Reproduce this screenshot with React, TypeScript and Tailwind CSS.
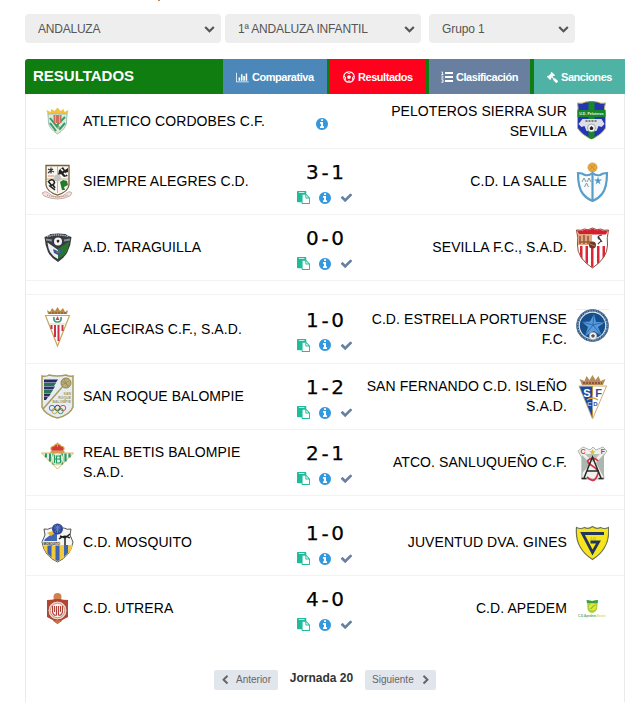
import type { ReactNode } from "react";
import { FaGavel } from "react-icons/fa";

const ICONS = {
  paste:
    "M768 1664h896v-640h-416q-40 0-68-28t-28-68v-416h-384v1152zm256-1440v-64q0-13-9.5-22.5t-22.5-9.5h-704q-13 0-22.5 9.5t-9.5 22.5v64q0 13 9.5 22.5t22.5 9.5h704q13 0 22.5-9.5t9.5-22.5zm256 672h299l-299-299v299zm512 128v672q0 40-28 68t-68 28h-960q-40 0-68-28t-28-68v-160h-544q-40 0-68-28t-28-68v-1344q0-40 28-68t68-28h1088q40 0 68 28t28 68v328q21 13 36 28l408 408q28 28 48 76t20 88z",
  info: "M1152 1376v-160q0-14-9-23t-23-9h-96v-512q0-14-9-23t-23-9h-320q-14 0-23 9t-9 23v160q0 14 9 23t23 9h96v320h-96q-14 0-23 9t-9 23v160q0 14 9 23t23 9h448q14 0 23-9t9-23zm-128-896v-160q0-14-9-23t-23-9h-192q-14 0-23 9t-9 23v160q0 14 9 23t23 9h192q14 0 23-9t9-23zm640 416q0 209-103 385.5t-279.5 279.5-385.5 103-385.5-103-279.5-279.5-103-385.5 103-385.5 279.5-279.5 385.5-103 385.5 103 279.5 279.5 103 385.5z",
  check:
    "M1671 566q0 40-28 68l-724 724-136 136q-28 28-68 28t-68-28l-136-136-362-362q-28-28-28-68t28-68l136-136q28-28 68-28t68 28l294 295 656-657q28-28 68-28t68 28l136 136q28 28 28 68z",
  down: "M1683 808l-742 741q-19 19-45 19t-45-19l-742-741q-19-19-19-45.5t19-45.5l166-165q19-19 45-19t45 19l531 531 531-531q19-19 45-19t45 19l166 165q19 19 19 45.5t-19 45.5z",
  left: "M1427 301l-531 531 531 531q19 19 19 45t-19 45l-166 166q-19 19-45 19t-45-19l-742-742q-19-19-19-45t19-45l742-742q19-19 45-19t45 19l166 166q19 19 19 45t-19 45z",
};

function Icon({ name, className }: { name: keyof typeof ICONS; className: string }) {
  return (
    <svg viewBox="0 0 1792 1792" fill="currentColor" className={className}>
      <path d={ICONS[name]} />
    </svg>
  );
}

function ChartIcon() {
  return (
    <svg viewBox="0 0 2048 1792" fill="currentColor" className="w-[13px] h-[11px] shrink-0">
      <path d="M640 896v512h-256v-512h256zm384-512v1024h-256v-1024h256zm1024 1152v128h-2048v-1536h128v1408h1920zm-640-896v768h-256v-768h256zm384-384v1152h-256v-1152h256z" />
    </svg>
  );
}

function BallIcon() {
  return (
    <svg viewBox="0 0 12 12" className="w-3 h-3 shrink-0">
      <circle cx="6" cy="6" r="5.300" fill="none" stroke="currentColor" strokeWidth="1.100" />
      <path d="M6 4l2 1.500-.8 2.300H4.800L4 5.500z" fill="currentColor" />
      <path d="M3.700 1.300L6 2.600l2.300-1.300M.9 5.200l1.600 1L2.200 9M11.100 5.200l-1.600 1 .3 2.800M4.300 10.900L6 9.800l1.700 1.100" fill="none" stroke="currentColor" />
    </svg>
  );
}

function ListIcon() {
  return (
    <svg viewBox="0 0 12 12" className="w-3 h-3 shrink-0">
      <path d="M4 1h8v2H4zM4 5h8v2H4zM4 9h8v2H4z" fill="currentColor" />
      <path d="M.3 1h1.200v2.500M.3 3.500h2.200M.4 5h1.500v.8L.5 7h2M.4 8.700h1.700v2.600H.3M1 10h1" fill="none" stroke="currentColor" strokeWidth=".8" />
    </svg>
  );
}

// Team crests, all on a 34x48 canvas
const CRESTS: Record<string, ReactNode> = {
  cordobes: (
    <>
      <path d="M8 19 6.500 13l4 2 1-3 3 2 3-3.500 3 3.500 3-2 1 3 4-2-1.500 6z" fill="#f2c23c" />
      <path d="M8 17h19l-.5 9q-1 6-9 11-8-5-9-11z" fill="#dfe9df" stroke="#9cc3ab" strokeWidth="1" />
      <path d="M10 21l8 10M25 20l-8 8 3 4 5-6M10 26l6 8" stroke="#339b69" strokeWidth="2" fill="none" />
      <path d="M13.500 18h8v8h-8z" fill="#cc6f5c" />
      <path d="M15.500 17v9M19.500 17v9" stroke="#e8b2a2" strokeWidth=".8" />
      <path d="M17 30l3-1-1 3z" fill="#e3b13c" />
    </>
  ),
  siempre: (
    <>
      <path d="M6 7.500h23V27q-1 7-11.500 10Q7 34 6 27z" fill="#f8f6ef" stroke="#77613b" strokeWidth="1.300" />
      <path d="M17.500 8v27M7 21h21" stroke="#aaa28c" strokeWidth=".8" />
      <path d="M19 12l4-3 2 3 3-2v4l-3 1 3 3-4 1-3-3-3 1z" fill="#222" />
      <path d="M21 11l2 2M24 15l2 2" stroke="#fff" strokeWidth="1.500" />
      <path d="M8 11l6 3M11 9.500v6M8 15l5-4" stroke="#333" strokeWidth="1.200" />
      <path d="M8 18h6" stroke="#e58b5a" />
      <path d="M8 24q4-4 6-1t-4 5l5 4M8 23l4 5M13 27l2 3" stroke="#222" strokeWidth="1.600" fill="none" />
      <circle cx="17.500" cy="20" r="3.500" fill="#c6c4c0" />
      <path d="M20 24l3-2 4 1 1 4-4 2 1 3h-3z" fill="#267b2b" />
      <path d="M2 35q3-2 5-1 5 5 10.500 5T28 34q2-1 4 1l-2 3q-6 3-12.500 3T4 38z" fill="#eee5e1" stroke="#b99088" strokeWidth=".7" />
      <path d="M7 37q10 4 21 0" stroke="#c36d65" fill="none" strokeDasharray="1 1" />
    </>
  ),
  taraguilla: (
    <>
      <path d="M4.500 13q4-1 6-3 8-1 15 0 2 2 6 3-.5 8-4 15-3 6-9.500 10Q11 34 8 28q-3-7-3.500-15z" fill="#373b42" />
      <path d="M7.500 18.500L18 26v9Q10 31 8.500 24z" fill="#eff0f3" />
      <path d="M29.500 17L18 25v10q9-4 10-11z" fill="#28762c" />
      <path d="M7 12.500q11-3 22 0" stroke="#aaadb3" strokeWidth="1.500" strokeDasharray="1.500 .7" fill="none" />
      <path d="M6 15.500l6 1M30 15.500l-6 1" stroke="#8b9197" strokeWidth="2" />
      <circle cx="18" cy="17.500" r="4" fill="#f4f4f4" />
      <path d="M18 15.500l1.500 1.300-.7 1.700h-1.600l-.7-1.700z" fill="#222" />
      <path d="M13 25l5 2 5-2-1 4-4 2-4-2z" fill="#2b5f9b" />
      <path d="M16 28h4" stroke="#d45b48" />
    </>
  ),
  algeciras: (
    <>
      <path d="M8 9 7 5l3 2 2-4 3 3 2.500-4L20 6l3-3 2 4 3-2-1 4z" fill="#b98b43" />
      <path d="M9 8h17" stroke="#874d3e" strokeWidth="1.200" strokeDasharray="2 1" />
      <path d="M5.500 10.500h24L17.500 41z" fill="#fff" stroke="#c9a95c" strokeWidth="1.200" />
      <path d="M11.500 20v4M15 20v12M18.500 20v16M22.500 20v6" stroke="#cb3148" strokeWidth="2" />
      <path d="M14 12q-1 5 3.500 5T21 12" stroke="#459a79" strokeWidth="1.700" fill="none" />
      <path d="M17.500 11l2 4h-4z" fill="#bd4f52" />
      <path d="M9.500 19h16" stroke="#d5b9a4" strokeWidth=".7" />
    </>
  ),
  roque: (
    <>
      <path d="M2 3q4 1 7-1 8 2 17 0 4 2 7 1v31q-3 8-15.500 11Q5 42 2 34z" fill="#e5edf2" stroke="#a99b5c" strokeWidth="1.500" />
      <path d="M4 6.500h14l-2 3H4z" fill="#242c5d" />
      <path d="M4 10h12l-2 3H4z" fill="#277257" />
      <path d="M4 13.500h11l-2 3H4z" fill="#2c3069" />
      <path d="M4 17h9l-2 3H4z" fill="#2c7458" />
      <path d="M4 20.500h7l-2 3H4zM4 24h4l-2 3H4z" fill="#302c62" />
      <path d="M3 36L24 12" stroke="#a99b5c" strokeWidth="1.500" />
      <circle cx="26" cy="10" r="5" fill="#b9ac75" stroke="#93864c" />
      <path d="M22 8l7 5M24 6l4 8M22 12l7-4" stroke="#8d8352" strokeWidth=".6" />
      <g fill="#a3965e" fontFamily="Liberation Sans" fontSize="3.500" fontWeight="700" textAnchor="end">
        <text x="31" y="21.500">SAN</text>
        <text x="31" y="25.500">ROQUE</text>
        <text x="31" y="29.500">BALOMPIE</text>
      </g>
      <g fill="none" strokeWidth="1">
        <circle cx="12" cy="35" r="2.700" stroke="#4e75bf" />
        <circle cx="17.500" cy="35" r="2.700" stroke="#333" />
        <circle cx="23" cy="35" r="2.700" stroke="#d9505b" />
        <circle cx="14.500" cy="38" r="2.700" stroke="#c8a93c" />
        <circle cx="20.500" cy="38" r="2.700" stroke="#43935c" />
      </g>
    </>
  ),
  betis: (
    <>
      <path d="M1.500 14h32L17.500 30z" fill="#fff" stroke="#d8b35c" strokeWidth="1" />
      <path d="M6 14.500v4M10 14.500v8M13.500 14.500v11M22 14.500v11M25.500 14.500v8M29.500 14.500v4" stroke="#299b62" strokeWidth="2.300" />
      <circle cx="17.500" cy="20" r="6" fill="#e3f1e3" stroke="#b5bd6b" strokeWidth=".7" />
      <path d="M14.500 16v8M20.500 16v8M14.500 20h6M16.500 17h3q2 2 0 3 3 2 0 4h-3z" stroke="#299b62" strokeWidth="1.200" fill="none" />
      <path d="M12 12q-3-4 2-5 1-2 3.500-2T21 7q5 1 2 5z" fill="#d43a3b" stroke="#d5a846" strokeWidth="1.200" />
      <path d="M17.500 3.500V8M16 5h3" stroke="#d5a846" />
      <path d="M10.500 13h14" stroke="#cc9742" strokeWidth="1.700" />
    </>
  ),
  mosquito: (
    <>
      <path d="M4 10q4 1 7-1h13q3 2 7 1l-1 6 3 7q-2 14-15.500 20Q4 37 2 23l3-7z" fill="#f5f5f3" stroke="#555" strokeWidth="1" />
      <path d="M3 26h30q-3 11-15.500 16.500Q5 37 3 26z" fill="#f3c83b" />
      <path d="M7.500 26h4v12.500l-4-4zM15.500 26h4v15l-2 1-2-1zM24 26h4v8l-4 4z" fill="#3d63b5" />
      <path d="M5 20l12-9v11H4z" fill="#4166b5" />
      <path d="M7 14q5-3 8 0l-4 3z" fill="#e7bb35" />
      <circle cx="17.500" cy="10" r="5.500" fill="#304896" />
      <path d="M17.500 6v8M14 9h7M15 13l5-7M15 6l5 7" stroke="#6788ce" strokeWidth=".9" />
      <path d="M19 20q5-5 11-1M25 18v8M20 17l5 2 5-4" stroke="#202020" strokeWidth="1.500" fill="none" />
      <path d="M2.500 22.500h18v4h-17z" fill="#e7e6dc" />
      <text x="3.500" y="25.800" fontFamily="Liberation Sans" fontSize="3" fontWeight="700" fill="#222">MOSQUITO</text>
    </>
  ),
  utrera: (
    <>
      <circle cx="17.500" cy="12" r="4" fill="#cf814e" />
      <path d="M7 15q5 0 8-1h5q3 1 8 1v17q-5 2-10.500 7Q12 34 7 32z" fill="#b34532" />
      <circle cx="17.500" cy="25.500" r="9.500" fill="#efcfc2" stroke="#9e4939" strokeWidth="1" />
      <circle cx="17.500" cy="25.500" r="7.200" fill="#faf2ed" stroke="#c2846f" strokeWidth=".8" />
      <path d="M12.500 21v6q1 4 4 3v-9M18.500 21v9q3 1 4-3v-6M14.500 21v6M20.500 21v6" stroke="#ad4038" strokeWidth="1.100" fill="none" />
      <path d="M13 36l4.500-1 4.500 1-4.500 3z" fill="#c87049" />
    </>
  ),
  peloteros: (
    <>
      <path d="M2.500 6q5 1 8-1 6-1 12 0 3 2 8 1-2 5 0 10v15q-4 7-14 11-10-4-14-11V16q1-5 0-10z" fill="#2636b3" stroke="#bcb45b" strokeWidth="1" />
      <path d="M13.500 4.500h6V41l-3 1-3-1zM2.500 13h28v7h-28z" fill="#16872a" />
      <text x="16.500" y="18" textAnchor="middle" fontFamily="Liberation Sans" fontSize="3.600" fontWeight="700" fill="#e8f4e8">U.D. Peloteros</text>
      <path d="M3.500 27l4-5h19l3 5-3 3-3-1-2 5h-10l-2-5-3 1z" fill="#dcdfe6" />
      <path d="M10.500 24h12" stroke="#58605d" strokeWidth="1.500" strokeDasharray="2 1" />
      <circle cx="16.500" cy="31" r="4" fill="#f5f5f5" stroke="#888" strokeWidth=".7" />
      <path d="M16.500 29l2 2-1 2h-2l-1-2z" fill="#222" />
    </>
  ),
  salle: (
    <>
      <circle cx="17.500" cy="9.500" r="4.600" fill="#e6a83d" stroke="#cc8d2e" strokeWidth=".6" />
      <path d="M15 7l5 5M15 11l5-4" stroke="#c88a31" strokeWidth=".8" />
      <path d="M3 15q4 0 7 2 4 1 7.500-2 3.500 3 7.500 2 3-2 7-2 0 15-5 21-4 5-9.500 7Q12 41 8 36 3 30 3 15z" fill="#f8fbfb" stroke="#5b9dc9" strokeWidth="2.200" />
      <path d="M17.500 16v26" stroke="#5b9dc9" strokeWidth="2.200" />
      <path d="M7 24l2-4 2 4M12 24l2-4 2 4M9.500 29l2-4 2 4" stroke="#7f999c" strokeWidth="1" fill="none" />
      <path d="M23 18.500l1 3h3l-2.500 2 1 3-2.500-2-2.500 2 1-3-2.500-2h3z" fill="#5197cb" />
    </>
  ),
  sevilla: (
    <>
      <path d="M1.500 6q5 1 8-1 3 2 8-1 5 3 8 1 3 2 8 1-2 8-1 15 0 13-15 23Q2 34 2.500 21q1-7-1-15z" fill="#fff" stroke="#8d4f33" strokeWidth="1" />
      <path d="M2 6.500q5 1 8-1 3 2 7.500-1 4.500 3 7.500 1 3 2 8 1l-2 4H4z" fill="#d51e2f" />
      <path d="M3 10h14v11H3z" fill="#e2a782" />
      <path d="M5 12v8M9 11v9M13 12v8M4 18h12" stroke="#995c3d" strokeWidth="1.600" />
      <path d="M23 12l4 6M27 11q-6 1-3 4 4 1-1 5" stroke="#363636" strokeWidth="1.100" fill="none" />
      <path d="M5 22h2.500v14L5 31zM10.500 22H13v18l-2.500-2zM16 22h2.500v21l-1 .5-1.500-1zM22 22h2.500v16L22 40zM27.500 22H30v9l-2.500 4z" fill="#db2638" />
      <circle cx="17.500" cy="21" r="3.500" fill="#6e392b" />
      <path d="M15 20l5 2" stroke="#b58158" />
    </>
  ),
  estrella: (
    <>
      <path d="M1 4.500h33" stroke="#edf0f3" />
      <circle cx="17.500" cy="20.500" r="16" fill="#1c4d82" stroke="#5f7896" strokeWidth="1" />
      <circle cx="17.500" cy="20.500" r="13.300" fill="#164e89" stroke="#dce5eb" strokeWidth="1.200" />
      <circle cx="17.500" cy="20.500" r="14.600" fill="none" stroke="#aebdcb" strokeWidth="1" strokeDasharray="1.500 1.200" />
      <path d="M19 9l2 8 9 0-7 5 4 9-8-5-9 5 3-9-6-5 8-.5z" fill="#579bdc" />
      <path d="M19 9l-1 11 11-3M18 20l8 10M18 20l-8 10M18 20L7 17" stroke="#1c5798" strokeWidth=".7" fill="none" />
      <circle cx="18" cy="31" r="3.800" fill="#f4f4f2" stroke="#999" strokeWidth=".6" />
      <path d="M18 29l2 1.500-1 2h-2l-1-2z" fill="#555" />
    </>
  ),
  fernando: (
    <>
      <path d="M7 12L4.500 6l5 2 2-5 3 4L17.500 2l3 5 3-4 2 5 5-2L28 12z" fill="#b38e57" />
      <path d="M8 10h19" stroke="#9a4b50" strokeWidth="2" strokeDasharray="2 1" />
      <path d="M4 13h27.500L17.500 46z" fill="#fff" stroke="#c6ae77" strokeWidth="1" />
      <path d="M4.500 13.500h13V45z" fill="#1f48a0" />
      <g fontFamily="Liberation Sans" fontWeight="700" textAnchor="middle">
        <text x="12" y="23.500" fontSize="11" fill="#fff">S</text>
        <text x="23.500" y="23.500" fontSize="11" fill="#2450a2">F</text>
        <text x="14.500" y="33" fontSize="6" fill="#cddcf2">C</text>
        <text x="20.500" y="33" fontSize="6" fill="#2450a2">D</text>
      </g>
      <path d="M12 27q5.500-4 11 0" stroke="#e6a33b" strokeWidth="1.500" fill="none" />
      <path d="M17.500 13v9M17.500 36v8" stroke="#b8924c" />
    </>
  ),
  sanluqueno: (
    <>
      <path d="M6 12h23v28H6z" fill="#e8e9e7" />
      <path d="M3 12l5-4 7 3 3-3 3 3 7-3 4 4-5 7 2 21H7V19z" fill="#f0f1ef" stroke="#a0a4a1" strokeWidth=".8" />
      <path d="M7 16l9 9L7 34zM29 15l-8 9 8 15z" fill="#acb7af" />
      <path d="M10 15h15l-7.500 8z" fill="#b7c0b9" />
      <g fontFamily="Liberation Sans" fontWeight="700" fontSize="7" textAnchor="middle" fill="#cf3b4b">
        <text x="8" y="15">C</text>
        <text x="28" y="15">F</text>
      </g>
      <path d="M17.500 10l1 2 2 .3-1.500 1.400.5 2-2-1-2 1 .5-2-1.500-1.400 2-.3z" fill="#d7c53f" />
      <path d="M23 22q-3-4-8-2t1 6 7 6-2 7-9-1" stroke="#d33448" strokeWidth="1.800" fill="none" />
      <path d="M9 39l8.500-21L26 39M12 32h11M6.500 39.500h5M23.500 39.500h5" stroke="#292929" strokeWidth="1.500" fill="none" />
    </>
  ),
  gines: (
    <>
      <path d="M1.500 8.500q4 2 8 0 4 2 8-1 4 3 8 1 4 2 8 0 1 12-4 20-4 7-12 12-8-5-12-12-5-8-4-20z" fill="#f6e51c" stroke="#6d7150" strokeWidth="1.200" />
      <path d="M29 14.500H7.500L17.500 33.500 23.500 23h-8" fill="none" stroke="#21355f" strokeWidth="2.800" />
      <text x="18" y="20.500" textAnchor="middle" fontFamily="Liberation Sans" fontSize="4" fill="#9d963e">J-D</text>
    </>
  ),
  apedem: (
    <>
      <path d="M12 15l5 1 6-1-1 9q-1 3-5 4-4-1-4.500-4z" fill="#a7cf38" />
      <path d="M11.500 15l5.500 1 6-1-.5 3h-10.500z" fill="#349e4d" />
      <circle cx="17.500" cy="22" r="3.500" fill="#e4e633" />
      <path d="M15.500 24l4-4" stroke="#50a344" />
      <g fontFamily="Liberation Sans" fontWeight="700" fontSize="3">
        <text x="3" y="31.500" fill="#4da878">C.D.Apedem</text>
        <text x="21.500" y="31.500" fill="#d4dc81">Morón</text>
      </g>
    </>
  ),
};

function Crest({ id }: { id: string }) {
  return (
    <svg viewBox="0 0 34 48" className="w-[34px] h-12 shrink-0">
      {CRESTS[id]}
    </svg>
  );
}

type Match = { home: string[]; away: string[]; crests: [string, string]; score?: [number, number] };

// One block per group of matches, separated by an empty strip
const BLOCKS: Match[][] = [
  [
    { home: ["ATLETICO CORDOBES C.F."], away: ["PELOTEROS SIERRA SUR", "SEVILLA"], crests: ["cordobes", "peloteros"] },
    { home: ["SIEMPRE ALEGRES C.D."], away: ["C.D. LA SALLE"], crests: ["siempre", "salle"], score: [3, 1] },
    { home: ["A.D. TARAGUILLA"], away: ["SEVILLA F.C., S.A.D."], crests: ["taraguilla", "sevilla"], score: [0, 0] },
  ],
  [
    { home: ["ALGECIRAS C.F., S.A.D."], away: ["C.D. ESTRELLA PORTUENSE", "F.C."], crests: ["algeciras", "estrella"], score: [1, 0] },
    { home: ["SAN ROQUE BALOMPIE"], away: ["SAN FERNANDO C.D. ISLEÑO", "S.A.D."], crests: ["roque", "fernando"], score: [1, 2] },
    { home: ["REAL BETIS BALOMPIE", "S.A.D."], away: ["ATCO. SANLUQUEÑO C.F."], crests: ["betis", "sanluqueno"], score: [2, 1] },
  ],
  [
    { home: ["C.D. MOSQUITO"], away: ["JUVENTUD DVA. GINES"], crests: ["mosquito", "gines"], score: [1, 0] },
    { home: ["C.D. UTRERA"], away: ["C.D. APEDEM"], crests: ["utrera", "apedem"], score: [4, 0] },
  ],
];

function rowHeight(m: Match) {
  if (!m.score) return "h-[55px]";
  if (m.crests[0] === "algeciras") return "h-[69px]";
  return "h-[66px]";
}

function TeamName({ lines, className }: { lines: string[]; className: string }) {
  return (
    <div className={`pb-px text-[14px] leading-5 tracking-[0.08px] whitespace-nowrap text-black ${className}`}>
      {lines.map((l) => (
        <div key={l}>{l}</div>
      ))}
    </div>
  );
}

function MatchRow({ match, last }: { match: Match; last: boolean }) {
  const { home, away, crests, score } = match;
  return (
    <div className={`flex items-center pl-[14px] pr-[15px] border-b ${last ? "border-transparent" : "border-[#f0f2f4]"} ${rowHeight(match)}`}>
      <Crest id={crests[0]} />
      <TeamName lines={home} className="ml-[9px] w-[212px]" />
      {score ? (
        <div className="flex flex-col items-center w-[60px] pt-[2px]">
          <div className="flex items-center justify-between w-[38px] h-[22px] font-['DejaVu_Sans'] text-[20px] leading-[22px] text-black [-webkit-text-stroke:0.25px_black]">
            <span>{score[0]}</span>
            <span className="pt-[2px]">-</span>
            <span>{score[1]}</span>
          </div>
          <div className="flex items-center gap-[8px] mt-[8px] h-[13px]">
            <Icon name="paste" className="w-[13px] h-[13px] text-[#1fbc9c]" />
            <Icon name="info" className="w-[14px] h-[14px] text-[#3598dc]" />
            <Icon name="check" className="w-[13px] h-[13px] text-[#67809f]" />
          </div>
        </div>
      ) : (
        <div className="flex justify-center w-[60px] pr-[7px] pt-[5px]">
          <Icon name="info" className="w-[14px] h-[14px] text-[#3598dc]" />
        </div>
      )}
      <TeamName lines={away} className="flex-1 flex flex-col items-end mr-[8px]" />
      <Crest id={crests[1]} />
    </div>
  );
}

function Select({ label, className }: { label: string; className: string }) {
  return (
    <div className={`flex items-center justify-between h-[29px] rounded bg-[#eee] pl-[13px] pr-[6px] text-[12px] text-[#555] ${className}`}>
      <span>{label}</span>
      <Icon name="down" className="w-[11px] h-[11px]" />
    </div>
  );
}

const TABS = [
  { label: "Comparativa", icon: <ChartIcon />, cls: "w-[104px] pl-[13px] bg-[#4b87b9]" },
  { label: "Resultados", icon: <BallIcon />, cls: "w-[95px] ml-[3px] pl-[13px] bg-[#ff001d]" },
  { label: "Clasificación", icon: <ListIcon />, cls: "w-[101px] ml-1 pl-[12px] bg-[#697f9f]" },
  { label: "Sanciones", icon: <FaGavel size={11} className="-scale-x-100" />, cls: "w-[91px] ml-1 pl-[13px] bg-[#4eb3a4]" },
];

export default function App() {
  return (
    <div className="relative w-[636px] h-[702px] overflow-hidden bg-white font-['Liberation_Sans',sans-serif]">
      <div className="absolute left-[158px] top-0 w-[2px] h-px bg-[#c28a4d]" />
      <div className="flex pl-[25px] pt-[14px]">
        <Select label="ANDALUZA" className="w-[196px] tracking-[-0.22px]" />
        <Select label="1ª ANDALUZA INFANTIL" className="w-[196px] ml-1 tracking-[-0.17px]" />
        <Select label="Grupo 1" className="w-[146px] ml-2 tracking-[-0.1px]" />
      </div>

      <div className="ml-[25px] mt-4 w-[600px]">
        <div className="flex h-[35px] rounded-tl-[3px] overflow-hidden bg-[#107d10] text-white">
          <h1 className="w-[198px] pl-[8px] text-[15px] leading-[34px] font-bold">RESULTADOS</h1>
          {TABS.map(({ label, icon, cls }) => (
            <div key={label} className={`flex shrink-0 items-center gap-[3px] pt-px text-[11px] font-bold tracking-[-0.45px] ${cls}`}>
              {icon}
              <span>{label}</span>
            </div>
          ))}
        </div>

        <div className="h-[620px] border-x border-[#e9ecef]">
          {BLOCKS.map((block, i) => (
            <div key={i}>
              {i > 0 && <div className="h-[14px] border-b border-[#f0f2f4]" />}
              {block.map((m, j) => (
                <MatchRow key={m.home[0]} match={m} last={i === BLOCKS.length - 1 && j === block.length - 1} />
              ))}
            </div>
          ))}

          <div className="flex items-center justify-center mt-[27px] text-[#666]">
            <div className="flex items-center w-16 h-5 rounded-[2px] bg-[#e1e5ec] pl-[6px] text-[10px]">
              <Icon name="left" className="w-[10px] h-[10px] mr-[6px]" />
              Anterior
            </div>
            <div className="w-[87px] text-center text-[12px] font-bold text-[#333] pb-[3px]">Jornada 20</div>
            <div className="flex items-center w-[71px] h-5 rounded-[2px] bg-[#e1e5ec] pl-[7px] text-[10px]">
              Siguiente
              <Icon name="left" className="w-[10px] h-[10px] ml-[7px] -scale-x-100" />
            </div>
          </div>
        </div>
      </div>
    </div>
  );
}
